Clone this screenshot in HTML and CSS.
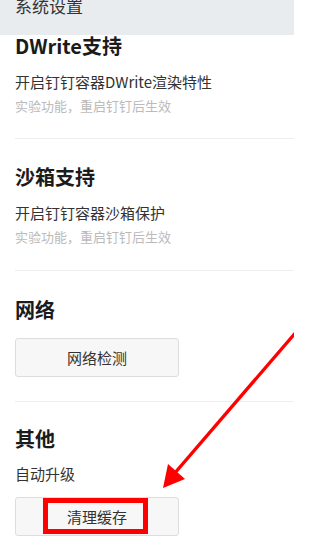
FILE: index.html
```html
<!DOCTYPE html>
<html lang="zh-CN">
<head>
<meta charset="utf-8">
<title>系统设置</title>
<link rel="stylesheet" href="styles.css">
</head>
<body>
<div class="page">
  <header class="topbar"><span class="topbar-title">系统设置</span></header>
  <main class="content">
    <section class="group group-first">
      <h2 class="group-title">DWrite支持</h2>
      <p class="desc">开启钉钉容器DWrite渲染特性</p>
      <p class="hint">实验功能，重启钉钉后生效</p>
    </section>
    <section class="group">
      <h2 class="group-title">沙箱支持</h2>
      <p class="desc">开启钉钉容器沙箱保护</p>
      <p class="hint">实验功能，重启钉钉后生效</p>
    </section>
    <section class="group group-net">
      <h2 class="group-title">网络</h2>
      <button class="btn btn-after-title" type="button">网络检测</button>
    </section>
    <section class="group group-other">
      <h2 class="group-title">其他</h2>
      <p class="desc desc-other">自动升级</p>
      <button class="btn btn-cache" type="button">清理缓存<span class="highlight"></span></button>
    </section>
  </main>
  <svg class="arrow" width="294" height="556" viewBox="0 0 294 556" aria-hidden="true">
    <line x1="297" y1="331" x2="174" y2="474" stroke="#ff0000" stroke-width="3.4" stroke-linecap="round"/>
    <polygon points="163,488 168,464 185,479" fill="#ff0000"/>
  </svg>
</div>
</body>
</html>
```
FILE: styles.css
```css
* { box-sizing: border-box; }
html, body {
  margin: 0;
  padding: 0;
  background: #ffffff;
}
body {
  font-family: "Noto Sans CJK SC", "Noto Sans", sans-serif;
  color: #333333;
  overflow: hidden;
}
.page {
  position: relative;
  width: 294px;
  height: 556px;
  overflow: hidden;
}
.topbar {
  height: 35px;
  background: #e9ecef;
  padding-left: 15px;
  display: flex;
  align-items: flex-start;
  overflow: hidden;
}
.topbar-title {
  font-size: 17px;
  line-height: 17px;
  margin-top: -3px;
  color: #333333;
}
.content {
  padding-left: 15px;
}
.group {
  padding: 28px 0 27px;
  border-bottom: 1px solid #eeeeee;
}
.group-first {
  padding-top: 1px;
  padding-bottom: 26px;
}
.group-net {
  padding-top: 29px;
  padding-bottom: 24px;
}
.group-other {
  padding-top: 27px;
  border-bottom: none;
}
.group-title {
  margin: 0;
  font-size: 20px;
  line-height: 20px;
  font-weight: 700;
  color: #1b1b1b;
}
.desc {
  margin: 18px 0 0;
  font-size: 15px;
  line-height: 15px;
  color: #333333;
}
.desc-other {
  margin-top: 17px;
}
.hint {
  margin: 10px 0 0;
  font-size: 13px;
  line-height: 13px;
  color: #bbbbbb;
}
.btn {
  position: relative;
  display: flex;
  align-items: center;
  justify-content: center;
  width: 164px;
  height: 39px;
  margin-top: 18px;
  padding: 0;
  background: #f7f7f7;
  border: 1px solid #dddddd;
  border-radius: 3px;
  font-family: "Noto Sans CJK SC", "Noto Sans", sans-serif;
  font-size: 15px;
  line-height: 15px;
  color: #333333;
}
.btn-cache {
  margin-top: 16px;
}
.highlight {
  position: absolute;
  left: 27px;
  top: 0;
  width: 105px;
  height: 36px;
  border: 5px solid #ff0000;
}
.arrow {
  position: absolute;
  left: 0;
  top: 0;
  pointer-events: none;
}
```
